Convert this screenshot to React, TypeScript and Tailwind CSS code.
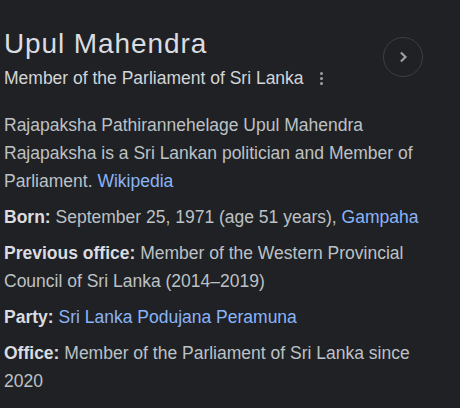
import React from 'react';

type Fact = {
    label: string;
    text: string;
    link?: string;
};

const facts: Fact[] = [
    { label: 'Born', text: 'September 25, 1971 (age 51 years), ', link: 'Gampaha' },
    { label: 'Previous office', text: 'Member of the Western Provincial Council of Sri Lanka (2014–2019)' },
    { label: 'Party', text: '', link: 'Sri Lanka Podujana Peramuna' },
    { label: 'Office', text: 'Member of the Parliament of Sri Lanka since 2020' },
];

const App: React.FC = () => {
    return (
        <div className="min-h-screen w-[460px] bg-[#202124] font-['Liberation_Sans',Arial,sans-serif] text-[#bdc1c6]">
            <div className="w-[420px] pl-[4px] pt-[27px]">
                {/* header */}
                <div className="flex items-start justify-between">
                    <div>
                        <h2 className="text-[28px] leading-[34px] tracking-[0.9px] text-[#dadce0]">Upul Mahendra</h2>
                        <div className="mt-[3px] flex items-center">
                            <span className="text-[17.5px] leading-[28px] text-[#d2d5d9]">Member of the Parliament of Sri Lanka</span>
                            <button className="ml-[14px] flex flex-col items-center gap-[2px] px-[2px]" aria-label="More options">
                                <span className="h-[3px] w-[3px] rounded-full bg-[#9aa0a6]" />
                                <span className="h-[3px] w-[3px] rounded-full bg-[#9aa0a6]" />
                                <span className="h-[3px] w-[3px] rounded-full bg-[#9aa0a6]" />
                            </button>
                        </div>
                    </div>
                    <button
                        className="mr-[-3px] mt-[10px] flex h-[40px] w-[40px] items-center justify-center rounded-full border border-[#3c4043]"
                        aria-label="Next"
                    >
                        <svg width="20" height="20" viewBox="0 0 24 24" fill="none">
                            <path d="M9.5 6.5l5.5 5.5-5.5 5.5" stroke="#9aa0a6" strokeWidth="2.6" />
                        </svg>
                    </button>
                </div>

                {/* description */}
                <p className="mt-[19px] text-[17.5px] leading-[28px]">
                    Rajapaksha Pathirannehelage Upul Mahendra Rajapaksha is a Sri Lankan politician and Member of Parliament.{' '}
                    <a className="text-[#8ab4f8]">Wikipedia</a>
                </p>

                {/* facts */}
                <div className="mt-[8px] flex flex-col gap-[8px]">
                    {facts.map((f) => (
                        <p key={f.label} className="text-[17.5px] leading-[28px]">
                            <b className="text-[#dadce0]">{f.label}:</b> {f.text}
                            {f.link && <a className="text-[#8ab4f8]">{f.link}</a>}
                        </p>
                    ))}
                </div>
            </div>
        </div>
    );
};

export default App;
